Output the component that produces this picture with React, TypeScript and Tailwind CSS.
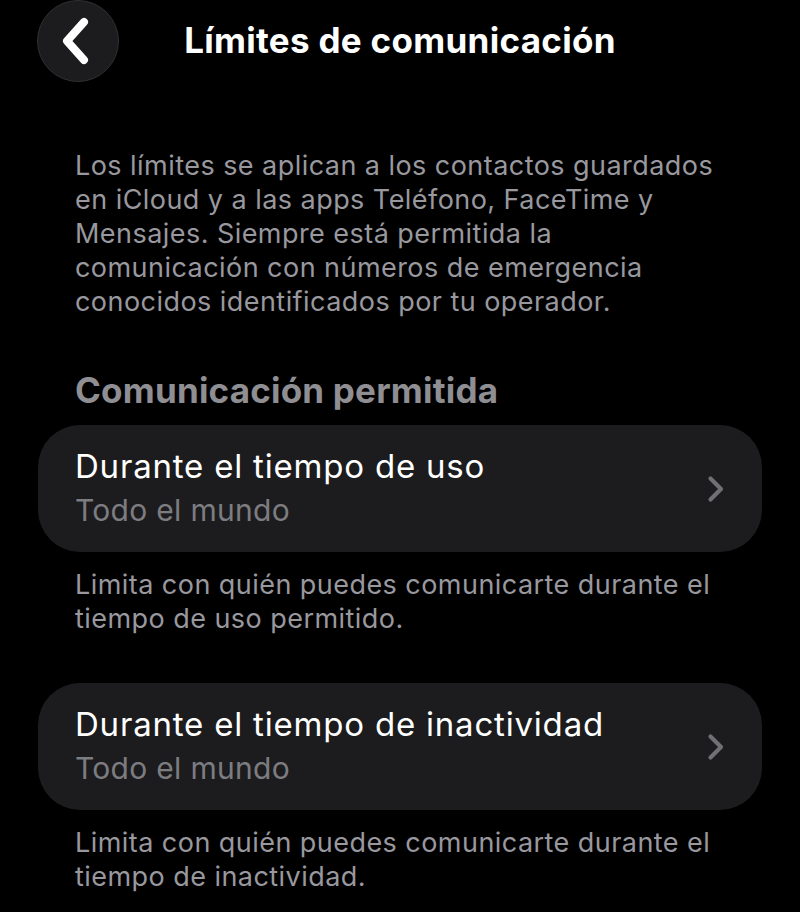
import React from "react";

interface RowProps {
  title: string;
  value: string;
  note: string;
}

const ChevronRight = () => (
  <svg width="20" height="28" viewBox="0 0 20 28" fill="none">
    <path
      d="M4.5 3.5L15 14L4.5 24.5"
      stroke="currentColor"
      strokeWidth="4.2"
      strokeLinecap="round"
      strokeLinejoin="round"
    />
  </svg>
);

const ChevronLeft = () => (
  <svg width="34" height="50" viewBox="0 0 34 50" fill="none">
    <path
      d="M26 6L9 25L26 44"
      stroke="currentColor"
      strokeWidth="8"
      strokeLinecap="round"
      strokeLinejoin="round"
    />
  </svg>
);

// One tappable setting with its explanation underneath
const LimitRow = ({ title, value, note }: RowProps) => (
  <div className="flex flex-col">
    <button className="mx-[38px] flex h-[127px] items-center justify-between rounded-[42px] bg-[#1c1c1e] pl-[37px] pr-[36px] text-left">
      <div className="flex flex-col">
        <span className="text-[33px] leading-[42px] tracking-[0.8px] text-white">
          {title}
        </span>
        <span className="text-[30px] leading-[46px] tracking-[0.3px] text-[#7c7c81]">
          {value}
        </span>
      </div>
      <span className="text-[#6f6f74]">
        <ChevronRight />
      </span>
    </button>
    <p className="px-[75px] pt-[16px] text-[27px] leading-[34px] tracking-[0.45px] text-[#98989e]">
      {note}
    </p>
  </div>
);

export default function App() {
  return (
    <div
      className="min-h-[912px] w-[800px] bg-black"
      style={{ fontFamily: "Inter, 'Noto Sans', sans-serif" }}
    >
      {/* Navigation bar */}
      <div className="relative flex h-[81px] items-center justify-center">
        <button className="absolute left-[37px] top-0 flex h-[82px] w-[82px] items-center justify-center rounded-full border border-[#303033] bg-[#1c1c1e] pr-[6px] text-white">
          <ChevronLeft />
        </button>
        <h1 className="text-[35px] font-bold tracking-[0.3px] text-white">
          Límites de comunicación
        </h1>
      </div>

      <p className="px-[75px] pr-[60px] pt-[68px] text-[27px] leading-[34px] tracking-[0.45px] text-[#98989e]">
        Los límites se aplican a los contactos guardados en iCloud y a las apps
        Teléfono, FaceTime y Mensajes. Siempre está permitida la comunicación
        con números de emergencia conocidos identificados por tu operador.
      </p>

      <h2 className="px-[75px] pt-[49px] pb-[13px] text-[35px] font-bold leading-[44px] tracking-[0.2px] text-[#8e8e93]">
        Comunicación permitida
      </h2>

      <div className="flex flex-col gap-[47px]">
        <LimitRow
          title="Durante el tiempo de uso"
          value="Todo el mundo"
          note="Limita con quién puedes comunicarte durante el tiempo de uso permitido."
        />
        <LimitRow
          title="Durante el tiempo de inactividad"
          value="Todo el mundo"
          note="Limita con quién puedes comunicarte durante el tiempo de inactividad."
        />
      </div>
    </div>
  );
}
